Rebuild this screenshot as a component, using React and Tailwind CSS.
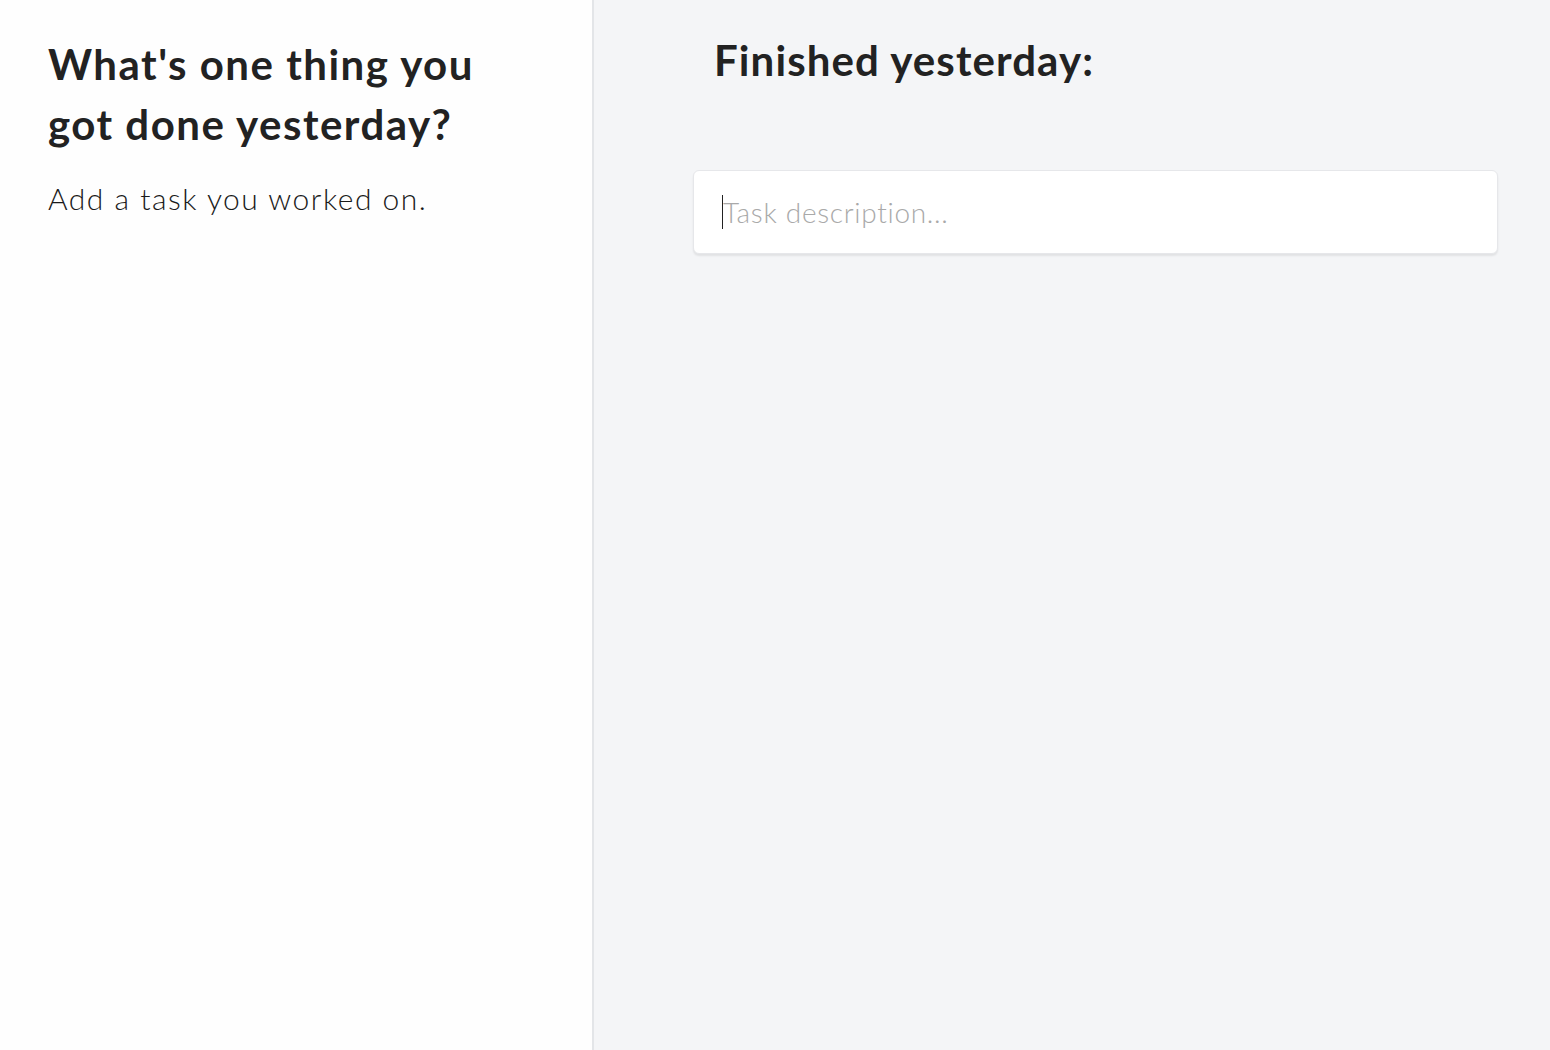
import React from 'react'

export default function App() {
  return (
    <div className="flex h-[1050px] w-[1550px] overflow-hidden" style={{ fontFamily: 'Lato, "Open Sans", sans-serif' }}>
      <div className="w-[594px] shrink-0 bg-[#fefefe] border-r-2 border-[#e3e5e8] px-12 pt-[34px]">
        <h1 className="max-w-[450px] text-[42px] font-bold leading-[60px] tracking-[1.5px] text-[#222]">What's one thing you got done yesterday?</h1>
        <p className="mt-[22px] text-[30px] font-light tracking-[1.5px] text-[#1a1a1a]">Add a task you worked on.</p>
      </div>
      <div className="flex-1 bg-[#f4f5f7] pl-[99px] pr-[52px] pt-[32px]">
        <h2 className="pl-[21px] text-[42px] font-bold leading-[56px] tracking-[1.1px] text-[#222]">Finished yesterday:</h2>
        <div className="mt-[82px] h-[84px] rounded-md border border-[#e6e7ea] bg-white shadow-[0_2px_2px_rgba(0,0,0,0.08)] flex items-center px-[28px]">
          <span className="h-[34px] w-px bg-[#222]" />
          <input className="flex-1 bg-transparent text-[28px] font-light tracking-[0.7px] text-[#222] placeholder:text-[#a9a9a9] outline-none" placeholder="Task description..." />
        </div>
      </div>
    </div>
  )
}
